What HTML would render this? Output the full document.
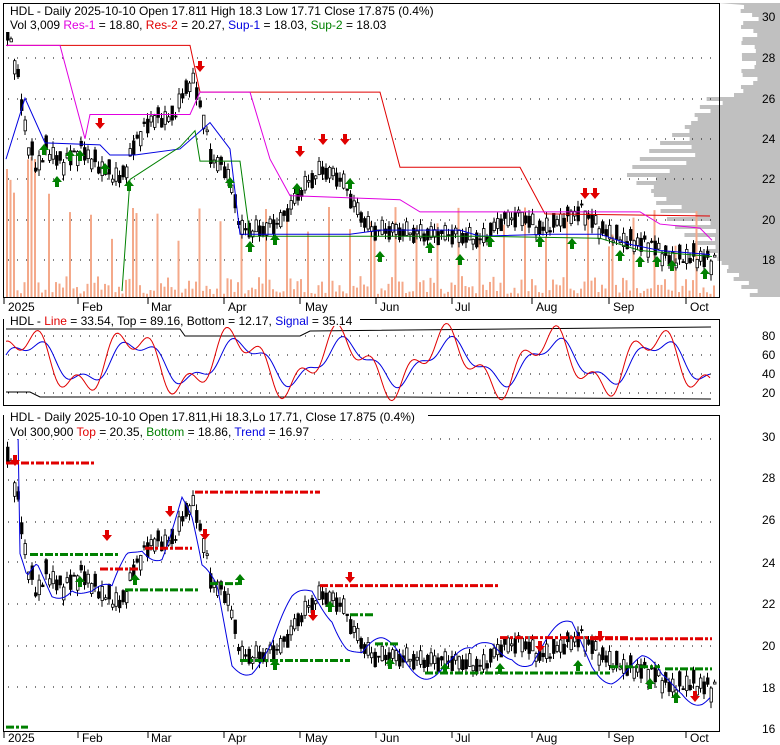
<!DOCTYPE html>
<html><head><meta charset="utf-8"><style>
html,body{margin:0;padding:0;background:#fff;}
body{width:780px;height:745px;overflow:hidden;font-family:"Liberation Sans",sans-serif;}
svg{display:block}
text{font-family:"Liberation Sans",sans-serif;font-size:12px;fill:#000}
</style></head><body>
<svg id="s" width="780" height="745" xmlns="http://www.w3.org/2000/svg">
<g id="vp"></g>
<g id="g1"></g>
<rect x="3.5" y="3.5" width="716" height="294" fill="none" stroke="#000"/>
<rect x="3.5" y="319.5" width="716" height="86" fill="none" stroke="#000"/>
<rect x="3.5" y="415.5" width="716" height="316" fill="none" stroke="#000"/>
<g font-size="13">
<text x="762" y="21">30</text><text x="762" y="62">28</text><text x="762" y="103">26</text><text x="762" y="143">24</text><text x="762" y="183">22</text><text x="762" y="224">20</text><text x="762" y="264">18</text>
<text x="762" y="340">80</text><text x="762" y="359">60</text><text x="762" y="378">40</text><text x="762" y="397">20</text>
<text x="762" y="441">30</text><text x="762" y="482">28</text><text x="762" y="524">26</text><text x="762" y="567">24</text><text x="762" y="608">22</text><text x="762" y="650">20</text><text x="762" y="692">18</text><text x="762" y="733">16</text>
</g>
<text x="8" y="311">2025</text><text x="82" y="311">Feb</text><text x="151" y="311">Mar</text><text x="228" y="311">Apr</text><text x="305" y="311">May</text><text x="380" y="311">Jun</text><text x="455" y="311">Jul</text><text x="536" y="311">Aug</text><text x="613" y="311">Sep</text><text x="690" y="311">Oct</text>
<text x="8" y="742">2025</text><text x="82" y="742">Feb</text><text x="151" y="742">Mar</text><text x="228" y="742">Apr</text><text x="305" y="742">May</text><text x="380" y="742">Jun</text><text x="455" y="742">Jul</text><text x="536" y="742">Aug</text><text x="613" y="742">Sep</text><text x="690" y="742">Oct</text>
<rect x="4" y="4" width="420" height="28" fill="#fff"/>
<text x="10" y="15">HDL - Daily 2025-10-10 Open 17.811  High 18.3  Low 17.71  Close 17.875 (0.4%)</text>
<text x="10" y="29">Vol 3,009 <tspan fill="#e000e0">Res-1</tspan> = 18.80, <tspan fill="#e00000">Res-2</tspan> = 20.27, <tspan fill="#0000e0">Sup-1</tspan> = 18.03, <tspan fill="#008000">Sup-2</tspan> = 18.03</text>
<rect x="4" y="313" width="356" height="13" fill="#fff"/>
<text x="10" y="325">HDL - <tspan fill="#e00000">Line</tspan> = 33.54, Top = 89.16, Bottom = 12.17, <tspan fill="#0000e0">Signal</tspan> = 35.14</text>
<rect x="4" y="409" width="424" height="30" fill="#fff"/>
<text x="10" y="421">HDL - Daily 2025-10-10 Open 17.811,Hi 18.3,Lo 17.71, Close 17.875 (0.4%)</text>
<text x="10" y="436">Vol 300,900 <tspan fill="#e00000">Top</tspan> = 20.35, <tspan fill="#008000">Bottom</tspan> = 18.86, <tspan fill="#0000e0">Trend</tspan> = 16.97</text>
</svg>
<script>
var NS="http://www.w3.org/2000/svg";
function el(p,t,a){var e=document.createElementNS(NS,t);for(var k in a)e.setAttribute(k,a[k]);var par=document.getElementById(p);par.appendChild(e);return e;}
var ctrl=[[5,29.5],[15,27.5],[25,24],[35,22.5],[45,23.5],[60,22.8],[80,23.5],[100,22.5],[120,22],[135,24],[150,25],[170,25],[190,27],[200,25.5],[210,23],[225,22.5],[240,19.5],[260,19.5],[280,20],[300,21.5],[320,22.5],[340,22],[355,20.5],[370,19.5],[390,19.5],[420,19.3],[450,19.3],[480,19],[500,20],[520,20.2],[540,19.5],[560,20],[580,20.5],[600,19.5],[620,19],[650,18.8],[670,18],[690,18.2],[710,18]];
function P(x){for(var i=0;i<ctrl.length-1;i++){if(x<=ctrl[i+1][0]){var a=ctrl[i],b=ctrl[i+1],t=(x-a[0])/(b[0]-a[0]);return a[1]+(b[1]-a[1])*t;}}return 18;}
function y1(p){return 17+(30-p)*20.3;} function y3(p){return 438+(30-p)*20.8;}
var gp="";
[58,99,139,179,220,260].forEach(function(y){for(var x=8;x<715;x+=9)gp+="M"+x+" "+y+"h1";});
[336,355,374,393].forEach(function(y){for(var x=8;x<715;x+=9)gp+="M"+x+" "+y+"h1";});
[439,480,522,562,604,646,687].forEach(function(y){for(var x=8;x<715;x+=9)gp+="M"+x+" "+y+"h1";});
el("g1","path",{d:gp,stroke:"#000","stroke-width":1});
[4,78,148,224,300,376,452,532,609,686].forEach(function(x){el("g1","path",{d:"M"+x+" 298v6M"+x+" 732v6",stroke:"#000"});});
var vp="M719 3";for(var y=5;y<296;y+=4){var c=Math.abs(y-175);var w=Math.max(0,160-c*1.1)*(0.6+0.4*Math.abs(Math.sin(y*0.37)));if(y<90)w=15+25*Math.abs(Math.sin(y*.2));vp+="L"+(780-w)+" "+y+"L"+(780-w)+" "+(y+4);}vp+="L780 297L780 3Z";
el("vp","path",{d:vp,fill:"#c0c0c0"});
for(var x=6;x<716;x+=3.5){var r=Math.abs(Math.sin(x*1.7));var h=3+18*r*Math.abs(Math.sin(x*0.31));if(Math.sin(x*3.3)>0.85)h=50+40*r;if(x<50&&Math.sin(x*2.1)>0)h=100+40*r;el("g1","rect",{x:x,y:297-h,width:2,height:h,fill:"#f4a98a"});}
function candles(f,lo,hi){for(var x=6;x<716;x+=3.5){var p=P(x)+0.3*Math.sin(x*0.9)+0.15*Math.sin(x*2.3);var o=p+0.35*Math.sin(x*1.3),c=p-0.35*Math.sin(x*1.3);var H=Math.max(o,c)+0.3*Math.abs(Math.sin(x*.7)),L=Math.min(o,c)-0.3*Math.abs(Math.cos(x*.5));var t=f(H),b=f(L);if(b>hi)b=hi;if(t<lo)t=lo;el("g1","path",{d:"M"+(x+1.5)+" "+t+"V"+b,stroke:"#000"});var bt=f(Math.max(o,c)),bb=f(Math.min(o,c));el("g1","rect",{x:x+0.5,y:Math.max(lo,bt),width:2.5,height:Math.max(1,bb-bt),fill:(o>c?"#000":"#fff"),stroke:"#000","stroke-width":0.8});}}
candles(y1,4,297);candles(y3,416,731);
function line(pts,col,f,w,dash){var d="";pts.forEach(function(q,i){d+=(i?"L":"M")+q[0]+" "+f(q[1]);});var a={d:d,fill:"none",stroke:col,"stroke-width":w||1};if(dash)a["stroke-dasharray"]=dash;el("g1","path",a);}
line([[6,28.6],[190,28.6],[200,26.3],[380,26.3],[400,22.6],[520,22.6],[545,20.3],[710,20.2]],"#e00000",y1);
line([[6,28.6],[60,28.6],[85,24],[90,25.2],[190,25.2],[200,26.3],[250,26.3],[270,23],[290,21.2],[400,21],[420,20.4],[640,20.4],[660,19.8],[700,19.6],[712,19]],"#e000e0",y1);
line([[6,23],[25,26],[45,23.8],[100,23.7],[110,23.2],[135,23.2],[180,23.5],[210,24.8],[230,23.5],[240,19.3],[350,19.3],[380,19.5],[400,19.5],[460,19.5],[480,19.2],[550,19.3],[600,19.3],[630,18.8],[660,18.5],[710,18.3]],"#0000e0",y1);
line([[122,16.5],[130,22],[180,23.6],[195,24.4],[200,22.9],[240,22.9],[250,19.2],[480,19.2],[600,19.1],[640,18.5],[712,18.2]],"#008000",y1);
function arrow(x,y,dn,col){var d=dn?"M"+(x-2)+" "+(y-9)+"h4v5h3l-5 6l-5-6h3z":"M"+(x-2)+" "+(y+9)+"h4v-5h3l-5-6l-5 6h3z";el("g1","path",{d:d,fill:col});}
[[12,27],[200,70],[100,127],[300,155],[323,143],[345,143],[595,197],[585,197]].forEach(function(a){arrow(a[0],a[1],1,"#e00000");});
[[44,146],[57,178],[70,152],[80,152],[105,165],[129,182],[230,179],[250,243],[275,236],[297,185],[350,180],[380,253],[430,244],[460,256],[490,238],[540,238],[572,240],[620,252],[640,258],[657,258],[672,262],[705,270]].forEach(function(a){arrow(a[0],a[1],0,"#008000");});
function pl(pts,col){var d="";pts.forEach(function(q,i){d+=(i?"L":"M")+q[0]+" "+q[1];});el("g1","path",{d:d,fill:"none",stroke:col});}
pl([[6,329],[180,329],[185,336],[300,336],[310,331],[711,327]],"#000");pl([[6,392],[30,392],[40,397],[400,397],[711,399]],"#000");
var rd="",bd="";for(var x=6;x<712;x+=2){var v=50+30*Math.sin(x*0.06)+15*Math.sin(x*0.17+1);var vb=50+22*Math.sin(x*0.06-0.3)+8*Math.sin(x*0.17);rd+=(x>6?"L":"M")+x+" "+(405-v*0.86);bd+=(x>6?"L":"M")+x+" "+(405-vb*0.86);}
el("g1","path",{d:bd,fill:"none",stroke:"#0000e0"});el("g1","path",{d:rd,fill:"none",stroke:"#e00000"});
var td="";for(var x=6;x<712;x+=2){var p=P(x+8)+0.9*Math.sin(x*0.07);if(x<20)p=30.3;td+=(x>6?"L":"M")+x+" "+Math.max(416,y3(p));}
el("g1","path",{d:td,fill:"none",stroke:"#0000e0"});
var dash="8 2 3 2";
[[6,96,28.8],[100,140,23.7],[145,192,24.7],[195,320,27.4],[320,500,22.9],[500,630,20.4],[590,712,20.35]].forEach(function(s){line([[s[0],s[2]],[s[1],s[2]]],"#e00000",y3,3,dash);});
[[30,120,24.4],[125,200,22.7],[210,240,23.0],[240,350,19.3],[350,375,21.5],[375,400,20.1],[425,610,18.7],[610,660,19.0],[665,712,18.9],[6,28,16.1]].forEach(function(s){line([[s[0],s[2]],[s[1],s[2]]],"#008000",y3,3,dash);});
[[15,464],[107,539],[170,515],[205,538],[313,619],[350,581],[540,650],[600,640],[695,700]].forEach(function(a){arrow(a[0],a[1],1,"#e00000");});
[[80,578],[135,576],[240,576],[275,661],[330,603],[390,660],[445,665],[500,665],[578,662],[650,680],[676,694]].forEach(function(a){arrow(a[0],a[1],0,"#008000");});
</script>
</body></html>
